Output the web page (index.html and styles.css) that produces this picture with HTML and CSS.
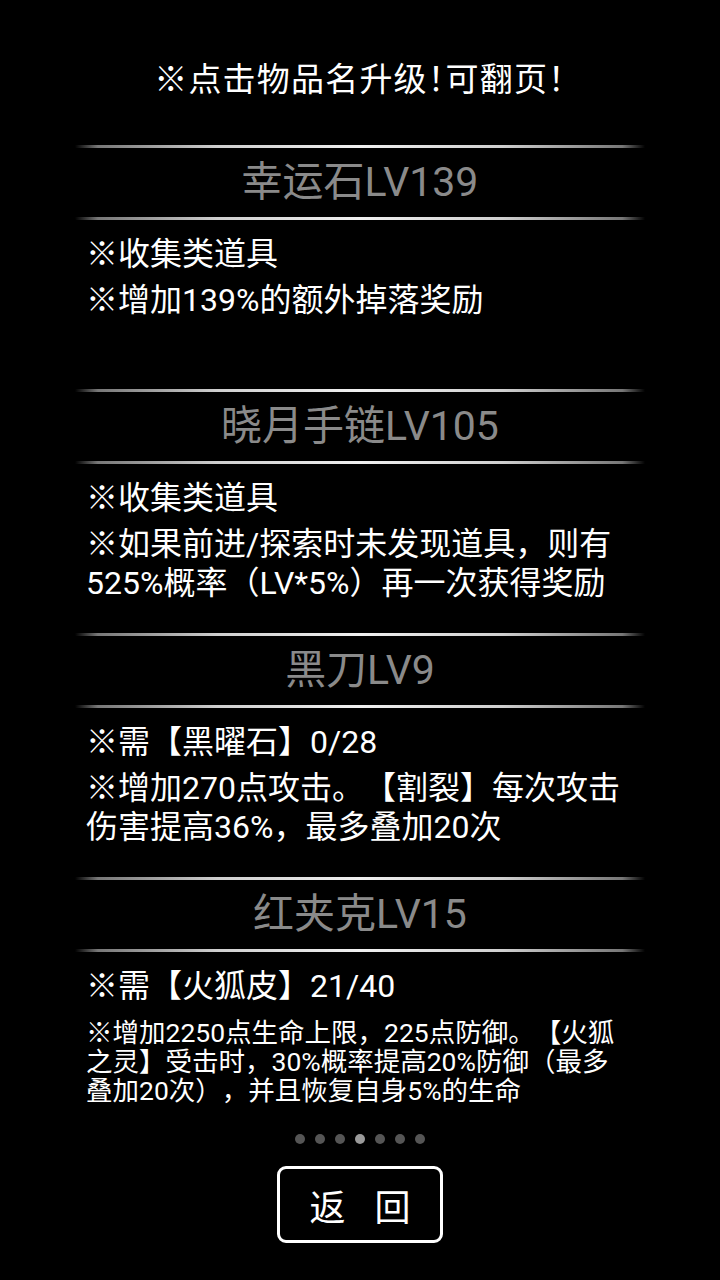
FILE: index.html
```html
<!DOCTYPE html>
<html lang="zh">
<head>
    <meta charset="UTF-8">
    <meta name="viewport" content="width=device-width, initial-scale=1.0">
    <title>物品升级</title>
    <link rel="stylesheet" href="styles.css">
</head>
<body>
    <div class="page">
        <p class="tip">※点击物品名升级！可翻页！</p>

        <div class="list">
            <div class="item">
                <div class="item-head">
                    <div class="rule"></div>
                    <div class="item-name">幸运石LV139</div>
                    <div class="rule"></div>
                </div>
                <div class="item-body">
                    <p>※收集类道具</p>
                    <p>※增加139%的额外掉落奖励</p>
                </div>
            </div>

            <div class="item">
                <div class="item-head">
                    <div class="rule"></div>
                    <div class="item-name">晓月手链LV105</div>
                    <div class="rule"></div>
                </div>
                <div class="item-body">
                    <p>※收集类道具</p>
                    <p>※如果前进/探索时未发现道具，则有525%概率（LV*5%）再一次获得奖励</p>
                </div>
            </div>

            <div class="item">
                <div class="item-head">
                    <div class="rule"></div>
                    <div class="item-name">黑刀LV9</div>
                    <div class="rule"></div>
                </div>
                <div class="item-body">
                    <p>※需【黑曜石】0/28</p>
                    <p>※增加270点攻击。【割裂】每次攻击伤害提高36%，最多叠加20次</p>
                </div>
            </div>

            <div class="item">
                <div class="item-head">
                    <div class="rule"></div>
                    <div class="item-name">红夹克LV15</div>
                    <div class="rule"></div>
                </div>
                <div class="item-body">
                    <p>※需【火狐皮】21/40</p>
                    <p class="small">※增加2250点生命上限，225点防御。【火狐之灵】受击时，30%概率提高20%防御（最多叠加20次），并且恢复自身5%的生命</p>
                </div>
            </div>
        </div>

        <div class="dots">
            <span class="dot"></span>
            <span class="dot"></span>
            <span class="dot"></span>
            <span class="dot active"></span>
            <span class="dot"></span>
            <span class="dot"></span>
            <span class="dot"></span>
        </div>

        <div class="actions">
            <button class="back">返回</button>
        </div>
    </div>
</body>
</html>
```

FILE: styles.css
```css
body { margin: 0; background: #000; color: #fff; font-family: Roboto, "Noto Sans CJK SC", sans-serif; text-spacing-trim: space-all; }
.page { width: 720px; height: 1280px; overflow: hidden; }
p { margin: 0; }

.tip { padding-top: 57px; margin-bottom: 42px; text-align: center; font-size: 33px; line-height: 46px; letter-spacing: 1.2px; font-feature-settings: "halt"; }

.item { height: 244px; }
.item-head { width: 570px; margin: 0 auto; text-align: center; }
.rule { height: 3px; background: linear-gradient(to right, rgba(255,255,255,0) 0%, #777 4%, #cfcfcf 25%, #f0f0f0 50%, #cfcfcf 75%, #777 96%, rgba(255,255,255,0) 100%); }
.item-name { height: 69px; line-height: 69px; font-size: 41px; color: #8a8a8a; }

.item-body { padding: 15px 0 0 86px; width: 544px; font-size: 32px; line-height: 39px; }
.item-body p + p { margin-top: 7px; }
.item-body p.small { margin-top: 12px; font-size: 26.5px; line-height: 29px; }

.dots { display: flex; justify-content: center; gap: 10px; margin-top: 13px; }
.dot { width: 10px; height: 10px; border-radius: 50%; background: #555; }
.dot.active { background: #9a9a9a; }

.actions { display: flex; justify-content: center; margin-top: 22px; }
.back { width: 166px; height: 77px; border: 3px solid #fff; border-radius: 9px; background: #000; color: #fff; font-family: "Noto Sans CJK SC", sans-serif; font-size: 36px; letter-spacing: 29px; text-indent: 29px; padding: 0; }
```
